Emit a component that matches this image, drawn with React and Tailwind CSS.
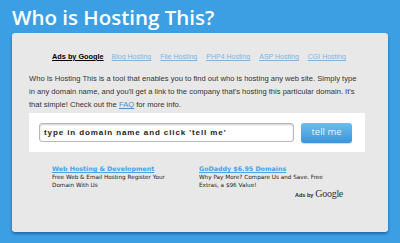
import React from "react";

const links = ["Blog Hosting", "File Hosting", "PHP4 Hosting", "ASP Hosting", "CGI Hosting"];

const ads = [
  {
    title: "Web Hosting & Development",
    text: "Free Web & Email Hosting Register Your Domain With Us",
  },
  {
    title: "GoDaddy $6.95 Domains",
    text: "Why Pay More? Compare Us and Save. Free Extras, a $96 Value!",
  },
];

export default function App() {
  return (
    <div className="w-[400px] h-[243px] overflow-hidden bg-[#3d9fe3]">
      <h1 className="pl-[12px] pt-[2px] h-[33px] text-[20.5px] leading-[30px] font-semibold text-white font-['Open_Sans',sans-serif] tracking-[0px]">
        Who is Hosting This?
      </h1>

      <div className="mx-[12px] h-[199px] rounded-[3px] bg-[#e8e8e8] shadow-[0_2px_3px_rgba(20,70,130,0.6)] px-[17px] pt-[19px] font-['Liberation_Sans',Arial,sans-serif]">
        <div className="flex items-center justify-center gap-[9px] text-[7px] leading-[10px] pr-[2px]">
          <span className="font-bold text-[7.3px] text-black underline mr-[-1px]">Ads by Google</span>
          {links.map((l) => (
            <a key={l} className="text-[#7db4e0] underline">
              {l}
            </a>
          ))}
        </div>

        <p className="mt-[10px] w-[332px] text-[7.6px] leading-[13px] text-[#333]">
          Who Is Hosting This is a tool that enables you to find out who is hosting any web site. Simply type
          in any domain name, and you'll get a link to the company that's hosting this particular domain. It's
          that simple! Check out the <a className="text-[#4b8fcc] underline">FAQ</a> for more info.
        </p>

        <div className="mt-[2px] w-[336px] h-[39px] bg-white flex items-center pl-[10px] gap-[7px]">
          <div className="w-[255px] h-[19px] rounded-[3px] border border-[#b8b8b8] shadow-[inset_0_1px_2px_rgba(0,0,0,0.2)] bg-white flex items-center pl-[4px]">
            <span className="text-[8px] font-bold tracking-[0.9px] text-[#222]">
              type in domain name and click 'tell me'
            </span>
          </div>
          <button className="w-[51px] h-[20px] rounded-[3px] bg-gradient-to-b from-[#68bdf0] to-[#3b95d9] text-[#e8f4ff] text-[9.5px] font-['Open_Sans',sans-serif] shadow-[0_1px_1px_rgba(0,0,0,0.15)]">
            tell me
          </button>
        </div>

        <div className="mt-[13px] pl-[23px] flex font-['DejaVu_Sans',Verdana,sans-serif]">
          {ads.map((a) => (
            <div key={a.title} className="w-[147px] text-[5.7px] leading-[8px] text-[#222]">
              <a className="block text-[6.3px] leading-[8px] font-bold text-[#4aa0e0] underline">{a.title}</a>
              <div className="w-[135px]">{a.text}</div>
            </div>
          ))}
        </div>
        <div className="w-[314px] flex justify-end items-end gap-[2px] mt-[-1px]">
          <span className="text-[5.5px] font-bold text-[#222] leading-[8px]">Ads by</span>
          <span className="text-[10px] leading-[11px] text-[#333] font-['Liberation_Serif',serif] tracking-[-0.3px]">Google</span>
        </div>
      </div>
    </div>
  );
}
